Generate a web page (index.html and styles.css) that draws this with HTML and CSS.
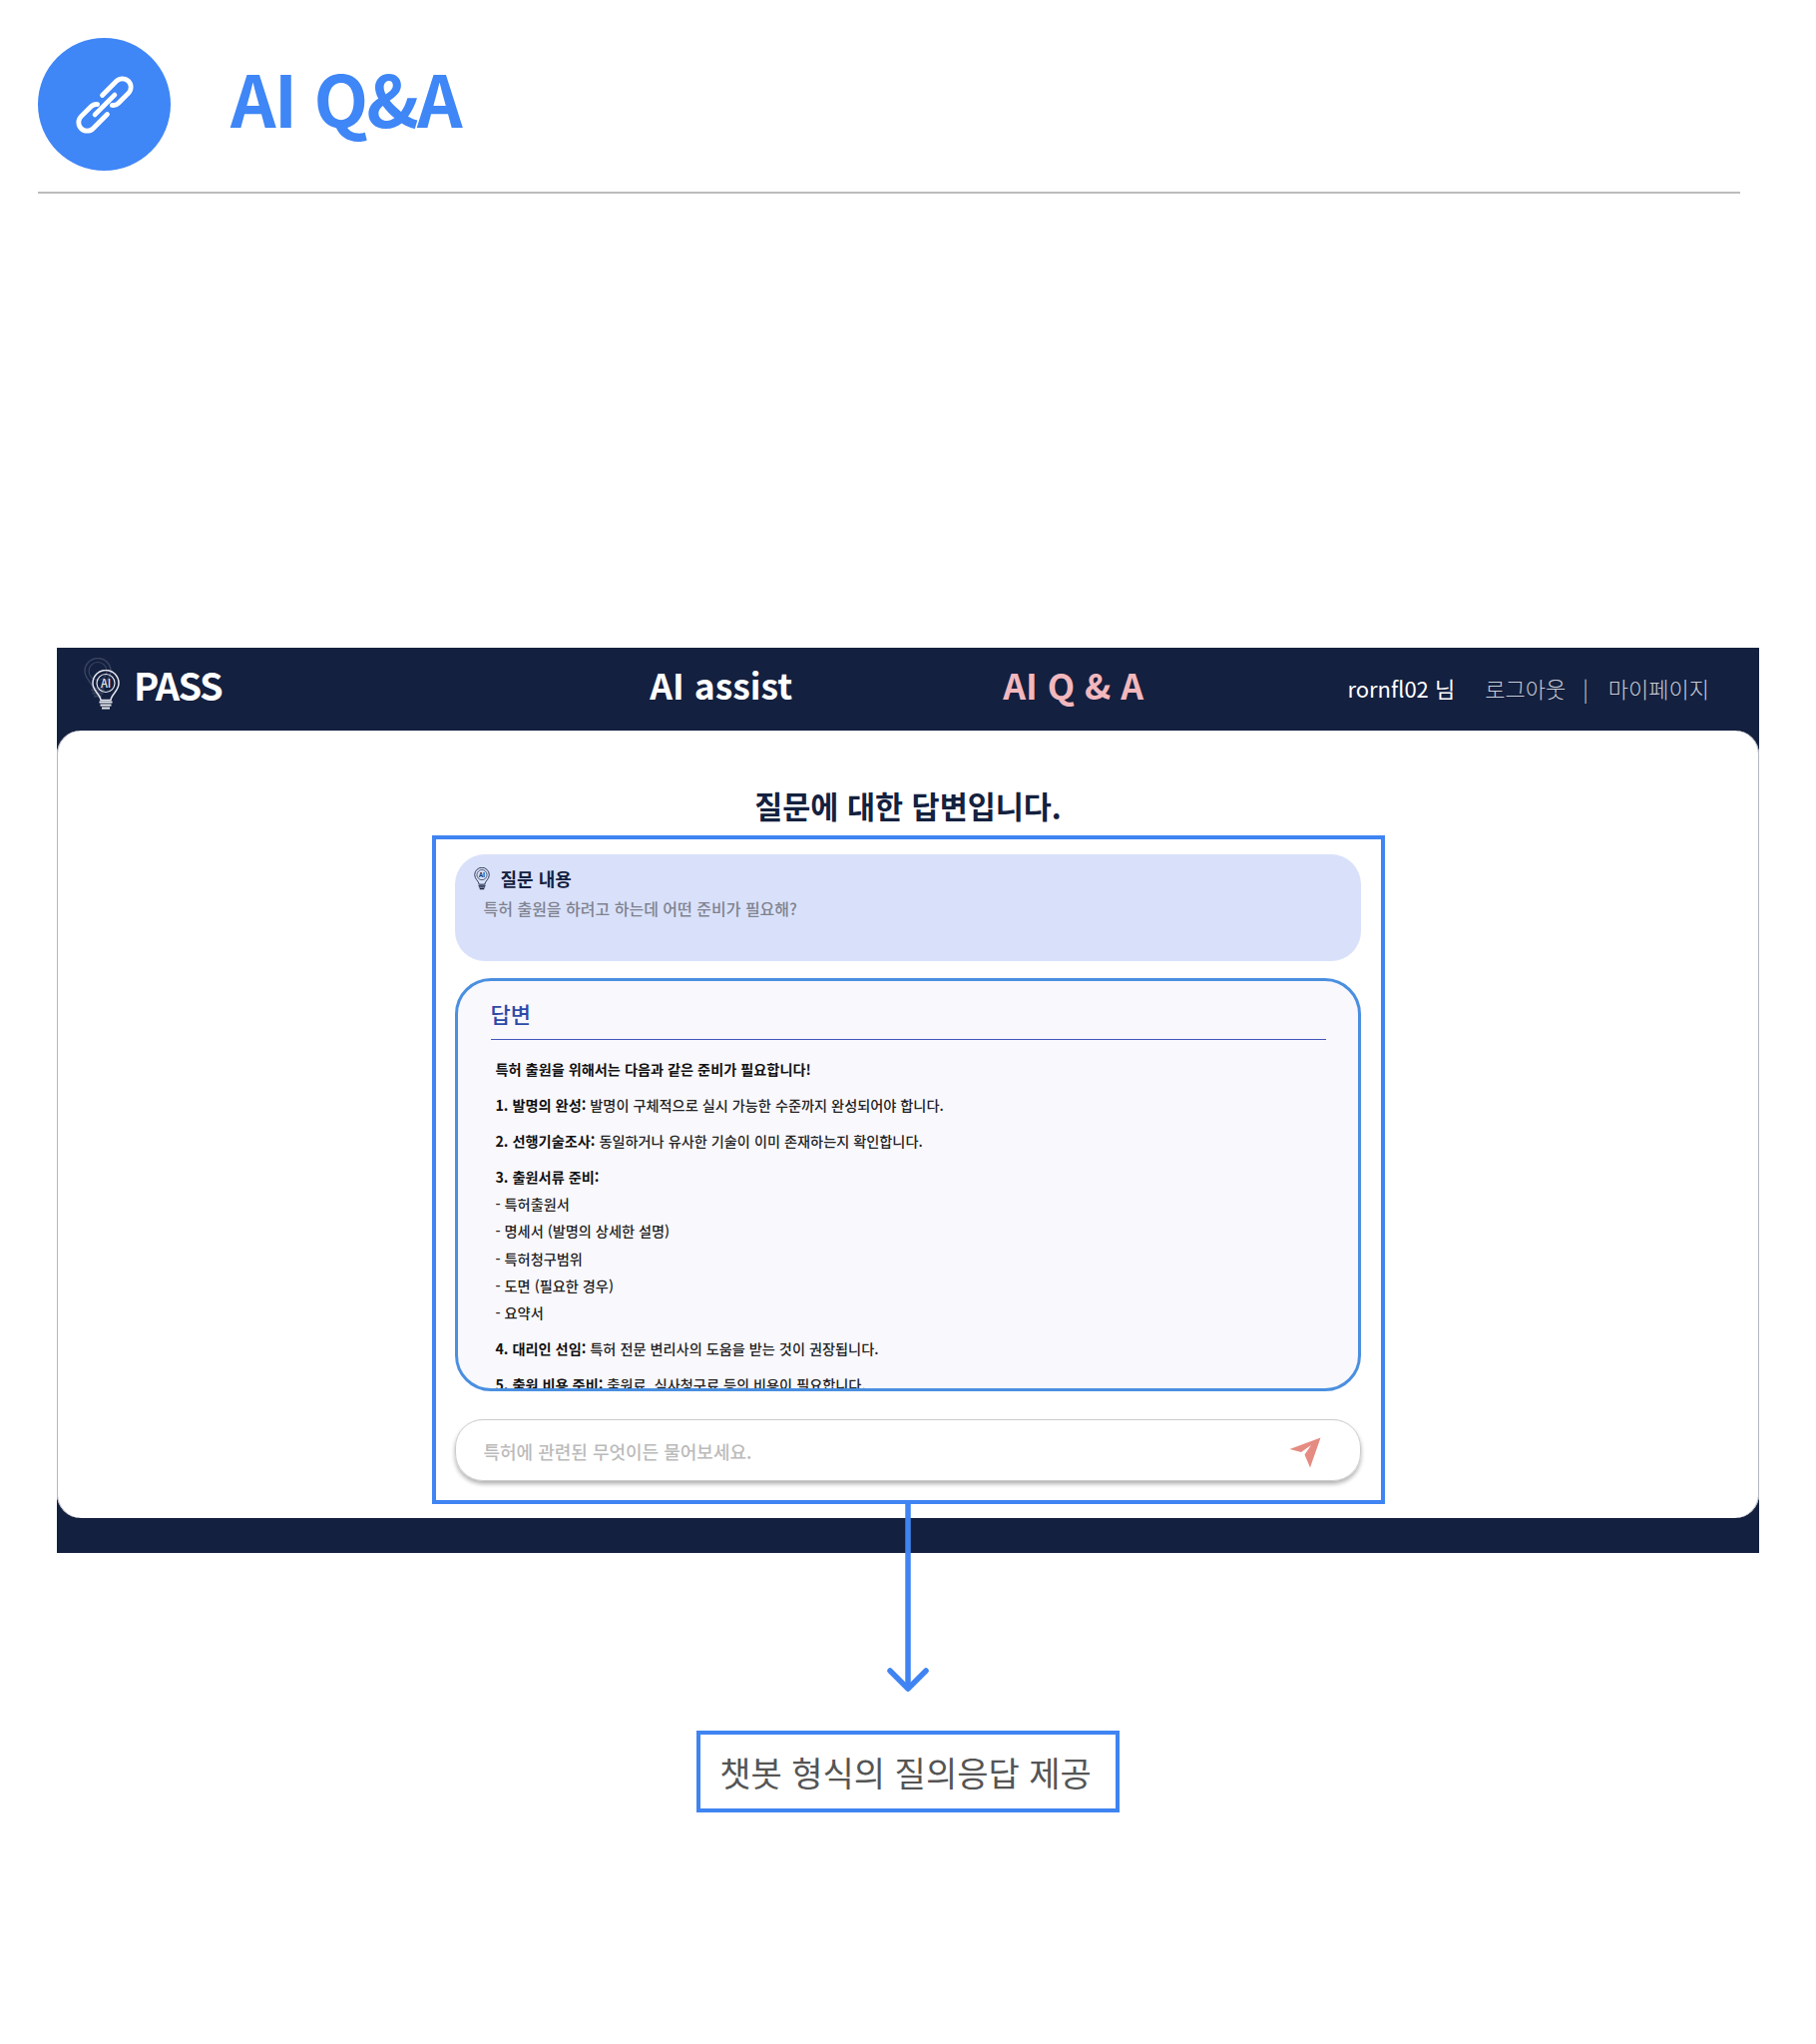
FILE: index.html
```html
<!doctype html>
<html lang="ko">
  <head>
    <meta charset="UTF-8" />
    <meta name="viewport" content="width=device-width, initial-scale=1.0" />
    <title>AI Q&amp;A</title>
    <link rel="stylesheet" href="styles.css">
  </head>

  <body>
    <svg class="defs" width="0" height="0">
      <symbol id="bulb" viewBox="0 0 28 41" overflow="visible">
        <path d="M9 30.5C8.4 24.5 1 21.500 1 13.500A13 13 0 0 1 27 13.500C27 21.500 19.600 24.500 19 30.500Z" fill="none" stroke="currentColor" stroke-width="1.500" />
        <circle cx="14" cy="13.500" r="9" fill="none" stroke="currentColor" stroke-width="1.200" />
        <path d="M7.500 32.500H20.500M8.500 35.500H19.500M10 38.500H18" stroke="currentColor" stroke-width="2" />
      </symbol>
    </svg>

    <section class="section-head">
      <div class="head-row">
        <div class="head-icon">
          <svg width="76" height="76" viewBox="-38 -38 76 76">
            <g transform="rotate(-45)" fill="none" stroke="#ffffff" stroke-width="4.800" stroke-linecap="round">
              <path d="M-5 8.500H-25a8.500 8.500 0 0 1 0 -17H-11q4 0 6 3" />
              <path d="M5 -8.500H25a8.500 8.500 0 0 1 0 17H11q-4 0 -6 -3" />
              <path d="M-14 0H14" />
            </g>
          </svg>
        </div>
        <h1>AI Q&amp;A</h1>
      </div>
      <div class="head-line"></div>
    </section>

    <div class="app">
      <header class="topbar">
        <div class="logo">
          <svg class="logo-ghost" width="28" height="41"><use href="#bulb" /></svg>
          <svg class="logo-bulb" width="28" height="41" viewBox="0 0 28 41">
            <use href="#bulb" width="28" height="41" />
            <text x="14" y="17.500" text-anchor="middle" font-size="11" font-weight="500" fill="currentColor">AI</text>
          </svg>
          <span>PASS</span>
        </div>
        <div class="nav-item">AI assist</div>
        <div class="nav-item active">AI Q &amp; A</div>
        <div class="user-menu">
          <span class="user-name">rornfl02 님</span>
          <span class="logout">로그아웃</span>
          <span class="sep">|</span>
          <span>마이페이지</span>
        </div>
      </header>

      <main class="card">
        <h2>질문에 대한 답변입니다.</h2>

        <div class="callout">
          <div class="question">
            <div class="question-title">
              <svg width="16" height="23" viewBox="0 0 28 41">
                <use href="#bulb" width="28" height="41" />
                <text x="14" y="17.500" text-anchor="middle" font-size="11" font-weight="700" fill="currentColor">AI</text>
              </svg>
              <span>질문 내용</span>
            </div>
            <div class="question-text">특허 출원을 하려고 하는데 어떤 준비가 필요해?</div>
          </div>

          <div class="answer">
            <div class="answer-title">답변</div>
            <div class="answer-body">
              <p><b>특허 출원을 위해서는 다음과 같은 준비가 필요합니다!</b></p>
              <p><b>1. 발명의 완성:</b> 발명이 구체적으로 실시 가능한 수준까지 완성되어야 합니다.</p>
              <p><b>2. 선행기술조사:</b> 동일하거나 유사한 기술이 이미 존재하는지 확인합니다.</p>
              <p><b>3. 출원서류 준비:</b><br>- 특허출원서<br>- 명세서 (발명의 상세한 설명)<br>- 특허청구범위<br>- 도면 (필요한 경우)<br>- 요약서</p>
              <p><b>4. 대리인 선임:</b> 특허 전문 변리사의 도움을 받는 것이 권장됩니다.</p>
              <p><b>5. 출원 비용 준비:</b> 출원료, 심사청구료 등의 비용이 필요합니다.</p>
            </div>
          </div>

          <div class="ask-box">
            <span>특허에 관련된 무엇이든 물어보세요.</span>
            <svg class="send-icon" width="32" height="31" viewBox="0 0 32 31">
              <path d="M31.500 0.500L21 30.500L15.500 17.500L22 8L12 15L0.500 12Z" fill="#e58b82" />
            </svg>
          </div>

          <svg class="arrow" width="50" height="192" viewBox="0 0 50 192">
            <path d="M25 0V187" stroke="#3f84f2" stroke-width="5.500" fill="none" />
            <path d="M7 171L25 189L43 171" stroke="#3f84f2" stroke-width="5.500" fill="none" stroke-linecap="round" stroke-linejoin="round" />
          </svg>
        </div>
      </main>
    </div>

    <div class="caption">챗봇 형식의 질의응답 제공</div>
  </body>
</html>
```

FILE: styles.css
```css
/* General styles */
body {
  margin: 0;
  background: #ffffff;
  color: #14213f;
  font-family: 'Noto Sans CJK KR', 'Noto Sans', sans-serif;
  min-height: 2048px;
}

.defs {
  position: absolute;
}

/* Section heading */
.section-head {
  padding: 38px 0 0 38px;
}

.head-row {
  display: flex;
  align-items: center;
  gap: 60px;
}

.head-icon {
  width: 133px;
  height: 133px;
  border-radius: 50%;
  background: #3f86f7;
  display: flex;
  align-items: center;
  justify-content: center;
}

.section-head h1 {
  margin: 0;
  padding-bottom: 16px;
  font-size: 71px;
  line-height: 100px;
  font-weight: 700;
  color: #3f86f7;
  letter-spacing: -1.800px;
}

.head-line {
  width: 1706px;
  height: 2px;
  margin-top: 21px;
  background: #bcbcbc;
}

/* App frame */
.app {
  width: 1706px;
  margin: 455px 0 0 57px;
  padding-bottom: 35px;
  background: #14203f;
}

.topbar {
  height: 83px;
  box-sizing: border-box;
  padding: 0 50px 10px 27px;
  display: flex;
  align-items: center;
  color: #ffffff;
}

.logo {
  display: flex;
  align-items: center;
  position: relative;
  font-size: 38px;
  font-weight: 700;
  letter-spacing: -1.500px;
  gap: 14px;
  padding-left: 8px;
}

.logo-ghost {
  position: absolute;
  left: 0;
  top: 0;
  color: #5c6680;
  opacity: 0.5;
}

.logo-bulb {
  color: #e6e8ee;
  margin-top: 12px;
  position: relative;
  letter-spacing: 0;
}

.logo span {
  line-height: 50px;
}

.nav-item {
  font-size: 35.500px;
  font-weight: 700;
  line-height: 50px;
  margin-left: 429px;
}

.nav-item.active {
  margin-left: 211px;
  color: #f2b8bd;
}

.user-menu {
  margin-left: auto;
  margin-top: 7px;
  display: flex;
  align-items: center;
  gap: 20px;
  font-size: 22px;
  font-weight: 300;
  color: #c9cdd6;
}

.user-name {
  color: #ffffff;
  font-weight: 400;
  margin-right: 10px;
}

.logout {
  margin-right: -3px;
}

/* White card */
.card {
  height: 789px;
  box-sizing: border-box;
  padding-top: 60px;
  background: #ffffff;
  border-radius: 24px;
  box-shadow: inset 1px 0 #b5b8c2, inset -1px 0 #b5b8c2;
  display: flex;
  flex-direction: column;
  align-items: center;
}

.card h2 {
  margin: 0 0 15px;
  font-size: 30.500px;
  line-height: 30px;
  font-weight: 700;
}

.callout {
  position: relative;
  width: 955px;
  height: 670px;
  box-sizing: border-box;
  border: 4px solid #3f84f2;
  padding: 15px 20px 19px 19px;
  background: #ffffff;
  display: flex;
  flex-direction: column;
}

.question {
  height: 107px;
  box-sizing: border-box;
  padding: 12px 24px;
  background: #d9e1fa;
  border-radius: 30px;
}

.question-title {
  display: flex;
  align-items: center;
  gap: 11px;
  margin-left: -5px;
  font-size: 18px;
  font-weight: 700;
  line-height: 24px;
}

.question-text {
  margin: 6px 0 0 5px;
  font-size: 16px;
  font-weight: 500;
  line-height: 24px;
  color: #80838f;
}

.answer {
  height: 414px;
  box-sizing: border-box;
  margin-top: 17px;
  padding: 16px 32px 0 33px;
  border: 3px solid #4a8fe0;
  border-radius: 36px;
  background: #f9f8fd;
  overflow: hidden;
}

.answer-title {
  height: 42px;
  border-bottom: 1px solid #4456b8;
  font-size: 22px;
  font-weight: 500;
  line-height: 32px;
  color: #2c4aa8;
}

.answer-body {
  margin: 15.800px 0 0 5px;
  font-size: 14.200px;
  font-weight: 500;
  line-height: 27.300px;
  color: #222222;
}

.answer-body p {
  margin: 0 0 8.700px;
}

.answer-body b {
  font-weight: 700;
  color: #111111;
}

.ask-box {
  height: 62px;
  box-sizing: border-box;
  margin-top: 28px;
  padding: 2px 39px 0 28px;
  border: 1px solid #cccccc;
  border-radius: 28px;
  box-shadow: 0 3px 4px rgba(0, 0, 0, 0.3);
  display: flex;
  align-items: center;
  justify-content: space-between;
  font-size: 18px;
  font-weight: 500;
  color: #bbbbbb;
}

.send-icon {
  margin-top: 2px;
}

.arrow {
  position: absolute;
  top: 100%;
  left: 50%;
  margin-left: -25px;
}

/* Caption */
.caption {
  width: 424px;
  height: 82px;
  box-sizing: border-box;
  margin: 178px 0 0 698px;
  padding-right: 5px;
  border: 4px solid #3f84f2;
  display: flex;
  align-items: center;
  justify-content: center;
  font-size: 34px;
  color: #555555;
}
```
